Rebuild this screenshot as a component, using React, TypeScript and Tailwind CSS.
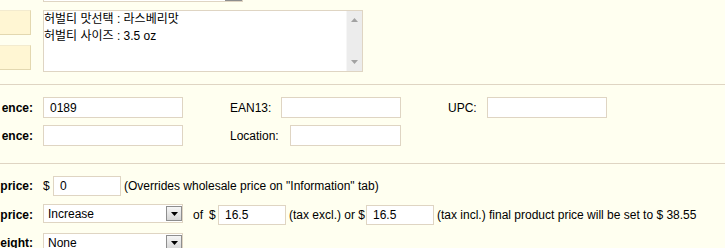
import React from "react";

function TextInput({ cls, value }: { cls: string; value?: string }) {
  return (
    <div className={`border border-[#dfd5c3] bg-white flex items-center pl-[6px] whitespace-nowrap ${cls}`}>
      {value}
    </div>
  );
}

function DropBtn() {
  return (
    <div className="w-[16px] h-[15px] border border-[#8e8e8e] bg-gradient-to-b from-[#f6f6f6] to-[#d6d6d6] flex items-center justify-center">
      <svg width="7" height="4" viewBox="0 0 7 4">
        <path d="M0 0H7L3.5 4Z" fill="#000" />
      </svg>
    </div>
  );
}

function Select({ value, cls = "" }: { value: string; cls?: string }) {
  return (
    <div className={`w-[140px] h-[19px] border border-[#dfd5c3] bg-white flex items-center pl-[4px] ${cls}`}>
      <span className="flex-1 whitespace-nowrap">{value}</span>
      <DropBtn />
    </div>
  );
}

function Label({ text }: { text: string }) {
  return (
    <div className="w-[33px] flex justify-end shrink-0">
      <span className="font-bold whitespace-nowrap">{text}</span>
    </div>
  );
}

function Arrow({ up }: { up?: boolean }) {
  return (
    <svg width="7" height="4" viewBox="0 0 7 4">
      <path d={up ? "M3.5 0L7 4H0Z" : "M0 0H7L3.5 4Z"} fill="#a2a2a2" />
    </svg>
  );
}

export default function App() {
  return (
    <div className="w-[725px] h-[248px] overflow-hidden bg-[#fffff0] text-[12px] text-black font-['Liberation_Sans','Noto_Sans_CJK_KR',Arial,sans-serif]">
      {/* attributes area */}
      <div className="h-[84px]">
        <div className="ml-[43px] w-[200px] h-[2px] border-x border-b border-[#dfd5c3] bg-white flex justify-end">
          <div className="w-[17px] h-[1px] border-x border-b border-[#8e8e8e] bg-[#dcdcdc]" />
        </div>
        <div className="mt-[8px] flex">
          <div className="w-[31px] flex flex-col gap-[10px] shrink-0">
            <div className="h-[25px] bg-[#fff6d3] border-r border-b border-[#e3d8b0] border-t border-t-[#f3ebcf]" />
            <div className="h-[25px] bg-[#fff6d3] border-r border-b border-[#e3d8b0] border-t border-t-[#f3ebcf]" />
          </div>
          <div className="ml-[12px] w-[320px] h-[62px] border border-[#dfd5c3] bg-white flex">
            <div className="flex-1 leading-[17px] whitespace-nowrap">
              <div>허벌티 맛선택 : 라스베리맛</div>
              <div>허벌티 사이즈 : 3.5 oz</div>
            </div>
            <div className="w-[16px] bg-[#ececec] border-l border-[#f6f6f6] flex flex-col justify-between items-center py-[7px]">
              <Arrow up />
              <Arrow />
            </div>
          </div>
        </div>
      </div>

      {/* references */}
      <div className="h-[79px] border-t border-[#dfd5c3] pt-[12px]">
        <div className="flex items-center h-[21px]">
          <Label text="ence:" />
          <TextInput cls="ml-[10px] w-[140px] h-[21px]" value="0189" />
          <span className="ml-[47px] w-[51px] whitespace-nowrap">EAN13:</span>
          <TextInput cls="w-[120px] h-[21px]" />
          <span className="ml-[47px] w-[39px] whitespace-nowrap">UPC:</span>
          <TextInput cls="w-[120px] h-[21px]" />
        </div>
        <div className="flex items-center h-[21px] mt-[7px]">
          <Label text="ence:" />
          <TextInput cls="ml-[10px] w-[140px] h-[21px]" />
          <span className="ml-[47px] w-[60px] whitespace-nowrap">Location:</span>
          <TextInput cls="w-[111px] h-[21px]" />
        </div>
      </div>

      {/* prices */}
      <div className="border-t border-[#dfd5c3] pt-[12px]">
        <div className="flex items-center h-[20px]">
          <Label text="price:" />
          <span className="ml-[10px] w-[10px]">$</span>
          <TextInput cls="w-[68px] h-[20px]" value="0" />
          <span className="ml-[3px] whitespace-nowrap">(Overrides wholesale price on &quot;Information&quot; tab)</span>
        </div>
        <div className="flex items-center h-[21px] mt-[8px]">
          <Label text="price:" />
          <Select cls="ml-[10px] self-start" value="Increase" />
          <span className="ml-[10px] w-[16px]">of</span>
          <span className="w-[9px]">$</span>
          <TextInput cls="w-[68px] h-[20px] self-end" value="16.5" />
          <span className="ml-[3px] w-[77px] whitespace-nowrap">(tax excl.) or $</span>
          <TextInput cls="w-[68px] h-[20px] self-end" value="16.5" />
          <span className="ml-[3px] whitespace-nowrap">(tax incl.) final product price will be set to $ 38.55</span>
        </div>
        <div className="flex items-center h-[19px] mt-[8px]">
          <Label text="eight:" />
          <Select cls="ml-[10px]" value="None" />
        </div>
      </div>
    </div>
  );
}
